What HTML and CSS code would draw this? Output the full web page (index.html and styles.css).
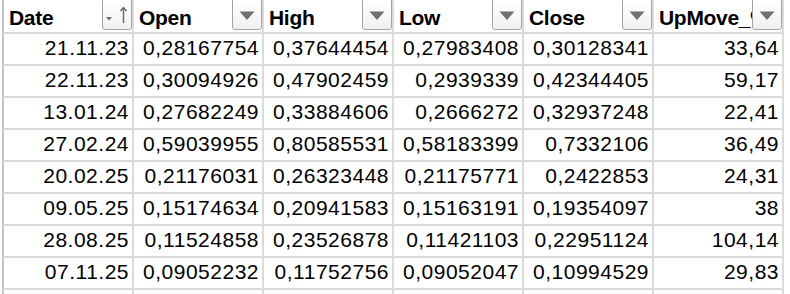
FILE: index.html
```html
<!DOCTYPE html>
<html>
<head>
<meta charset="utf-8">
<link rel="stylesheet" href="styles.css">
</head>
<body>
<div class="sheet">
  <div class="cell hd first">Date<span class="filter"><svg width="30" height="31" viewBox="0 0 30 31"><path d="M4 18 L10 18 L7 21.5 Z" fill="#707070"/><path d="M21.5 24 V8.5 M18.5 12 L21.5 8.5 L24.5 12" fill="none" stroke="#666" stroke-width="1.4"/></svg></span></div>
  <div class="cell hd">Open<span class="filter"><svg width="30" height="31" viewBox="0 0 30 31"><path d="M7.5 12.5 L22.5 12.5 L15 21 Z" fill="#707070"/></svg></span></div>
  <div class="cell hd">High<span class="filter"><svg width="30" height="31" viewBox="0 0 30 31"><path d="M7.5 12.5 L22.5 12.5 L15 21 Z" fill="#707070"/></svg></span></div>
  <div class="cell hd">Low<span class="filter"><svg width="30" height="31" viewBox="0 0 30 31"><path d="M7.5 12.5 L22.5 12.5 L15 21 Z" fill="#707070"/></svg></span></div>
  <div class="cell hd">Close<span class="filter"><svg width="30" height="31" viewBox="0 0 30 31"><path d="M7.5 12.5 L22.5 12.5 L15 21 Z" fill="#707070"/></svg></span></div>
  <div class="cell hd last">UpMove_%<span class="filter"><svg width="30" height="31" viewBox="0 0 30 31"><path d="M7.5 12.5 L22.5 12.5 L15 21 Z" fill="#707070"/></svg></span></div>

  <div class="cell first">21.11.23</div><div class="cell">0,28167754</div><div class="cell">0,37644454</div><div class="cell">0,27983408</div><div class="cell">0,30128341</div><div class="cell last">33,64</div>
  <div class="cell first">22.11.23</div><div class="cell">0,30094926</div><div class="cell">0,47902459</div><div class="cell">0,2939339</div><div class="cell">0,42344405</div><div class="cell last">59,17</div>
  <div class="cell first">13.01.24</div><div class="cell">0,27682249</div><div class="cell">0,33884606</div><div class="cell">0,2666272</div><div class="cell">0,32937248</div><div class="cell last">22,41</div>
  <div class="cell first">27.02.24</div><div class="cell">0,59039955</div><div class="cell">0,80585531</div><div class="cell">0,58183399</div><div class="cell">0,7332106</div><div class="cell last">36,49</div>
  <div class="cell first">20.02.25</div><div class="cell">0,21176031</div><div class="cell">0,26323448</div><div class="cell">0,21175771</div><div class="cell">0,2422853</div><div class="cell last">24,31</div>
  <div class="cell first">09.05.25</div><div class="cell">0,15174634</div><div class="cell">0,20941583</div><div class="cell">0,15163191</div><div class="cell">0,19354097</div><div class="cell last">38</div>
  <div class="cell first">28.08.25</div><div class="cell">0,11524858</div><div class="cell">0,23526878</div><div class="cell">0,11421103</div><div class="cell">0,22951124</div><div class="cell last">104,14</div>
  <div class="cell first">07.11.25</div><div class="cell">0,09052232</div><div class="cell">0,11752756</div><div class="cell">0,09052047</div><div class="cell">0,10994529</div><div class="cell last">29,83</div>
  <div class="cell first"></div><div class="cell"></div><div class="cell"></div><div class="cell"></div><div class="cell"></div><div class="cell last"></div>
</div>
</body>
</html>
```
FILE: styles.css
```css
html, body {
  margin: 0;
  padding: 0;
  background: #ffffff;
  overflow: hidden;
}
.sheet {
  display: grid;
  grid-template-columns: repeat(6, 130px);
  margin-left: 2px;
  font-family: "Liberation Sans", Arial, sans-serif;
  color: #000;
}
.cell {
  box-sizing: border-box;
  height: 32px;
  border-left: 2px solid #dadada;
  border-bottom: 2px solid #dadada;
  font-size: 21px;
  letter-spacing: 0.5px;
  line-height: 24px;
  padding: 2px 3px 0 0;
  text-align: right;
  white-space: nowrap;
  overflow: hidden;
}
.cell.first {
  border-left-color: #c4c4c4;
}
.cell.last {
  border-right: 2px solid #dadada;
  width: 132px;
}
.hd {
  position: relative;
  height: 34px;
  font-weight: bold;
  letter-spacing: -0.3px;
  text-align: left;
  line-height: 26px;
  padding: 5px 0 0 5px;
}
.filter {
  position: absolute;
  top: -1px;
  right: 0;
  width: 30px;
  height: 31px;
  box-sizing: border-box;
  border: 1px solid #a3a3a3;
  border-radius: 0 0 3px 3px;
  background: linear-gradient(#ffffff, #f1f1f1);
}
.filter svg {
  position: absolute;
  left: -1px;
  top: -1px;
}
```
